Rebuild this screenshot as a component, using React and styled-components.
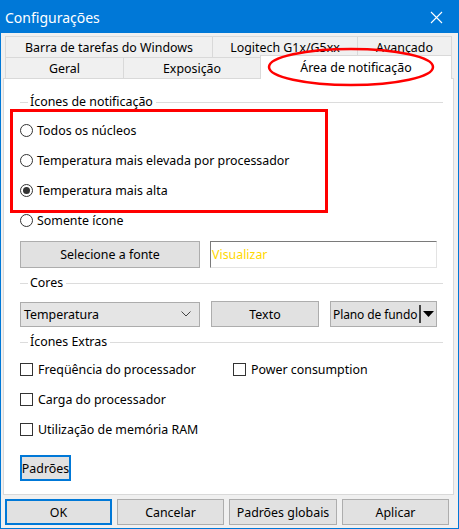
import React from "react";
import styled, { createGlobalStyle } from "styled-components";

const GlobalStyle = createGlobalStyle`
    html, body {
        margin: 0;
        padding: 0;
        background: #f0f0f0;
        overflow: hidden;
    }
    * { box-sizing: border-box; }
`;

const FONT = `"Noto Sans", "Open Sans", sans-serif`;

function App(){
    return(
        <Window>
            <GlobalStyle />
            <TitleBar>
                <span>Configurações</span>
                <CloseIcon width="13" height="13" viewBox="0 0 13 13">
                    <path d="M1 1 L12 12 M12 1 L1 12" stroke="#fff" strokeWidth="1.1" />
                </CloseIcon>
            </TitleBar>

            <Body>
                <TabRow>
                    <Tab width={207}>Barra de tarefas do Windows</Tab>
                    <Tab width={145}>Logitech G1x/G5xx</Tab>
                    <Tab width={95} last>Avançado</Tab>
                </TabRow>
                <TabRow>
                    <Tab width={118}>Geral</Tab>
                    <Tab width={137}>Exposição</Tab>
                    <Tab width={192} active last>Área de notificação</Tab>
                </TabRow>

                <Panel>
                    <GroupHeader><span>Ícones de notificação</span></GroupHeader>
                    <OptionList>
                        <Option><Radio /> Todos os núcleos</Option>
                        <Option><Radio /> Temperatura mais elevada por processador</Option>
                        <Option><Radio checked /> Temperatura mais alta</Option>
                        <Option><Radio /> Somente ícone</Option>
                    </OptionList>

                    <FontRow>
                        <Button width={180} height={27}>Selecione a fonte</Button>
                        <Preview>Visualizar</Preview>
                    </FontRow>

                    <GroupHeader gap={7}><span>Cores</span></GroupHeader>
                    <ColorRow>
                        <Select>
                            <span>Temperatura</span>
                            <svg width="10" height="6" viewBox="0 0 10 6">
                                <path d="M0.5 0.5 L5 5 L9.5 0.5" fill="none" stroke="#444" strokeWidth="1" />
                            </svg>
                        </Select>
                        <Button width={108} height={26}>Texto</Button>
                        <SplitButton>
                            <SplitLabel>Plano de fundo</SplitLabel>
                            <SplitDivider />
                            <ArrowIcon width="11" height="6" viewBox="0 0 11 6">
                                <path d="M0 0 L11 0 L5.5 6 Z" fill="#000" />
                            </ArrowIcon>
                        </SplitButton>
                    </ColorRow>

                    <GroupHeader gap={7}><span>Ícones Extras</span></GroupHeader>
                    <CheckGrid>
                        <Option><Check /> Freqüência do processador</Option>
                        <Option><Check /> Power consumption</Option>
                        <Option><Check /> Carga do processador</Option>
                        <span />
                        <Option><Check /> Utilização de memória RAM</Option>
                    </CheckGrid>

                    <Button width={51} height={26} focused gap={11}>Padrões</Button>
                </Panel>

                <Footer>
                    <Button width={107} height={26} focused>OK</Button>
                    <Button width={107} height={26}>Cancelar</Button>
                    <Button width={108} height={26}>Padrões globais</Button>
                    <Button width={107} height={26}>Aplicar</Button>
                </Footer>
            </Body>

            <MarkBox />
            <MarkEllipse width="170" height="42" viewBox="0 0 170 42">
                <ellipse cx="85" cy="21" rx="82" ry="18" fill="none" stroke="#ff0000" strokeWidth="2.5" />
            </MarkEllipse>
        </Window>
    )
}

const Window = styled.div`
    position: relative;
    width: 459px;
    height: 529px;
    border: 1px solid #0078d7;
    background: #f0f0f0;
    font-family: ${FONT};
    font-size: 12.4px;
    color: #000;
    display: flex;
    flex-direction: column;
`;

const TitleBar = styled.div`
    height: 32px;
    background: #0078d7;
    color: #fff;
    font-size: 14px;
    display: flex;
    align-items: center;
    justify-content: space-between;
    padding: 0 15px 0 4px;
`;

const CloseIcon = styled.svg`
    display: block;
`;

const Body = styled.div`
    flex: 1;
    display: flex;
    flex-direction: column;
    padding: 3px 4px 0 2px;
`;

const TabRow = styled.div`
    display: flex;
    margin: 0 0 0 2px;
    height: 21px;
`;

const Tab = styled.div`
    width: ${p => p.width}px;
    height: ${p => p.active ? 24 : 22}px;
    margin-top: ${p => p.active ? -2 : 0}px;
    background: ${p => p.active ? "#fff" : "#f0f0f0"};
    border: 1px solid #d9d9d9;
    border-right: ${p => p.last ? "1px solid #d9d9d9" : "none"};
    border-bottom: ${p => p.active ? "none" : "1px solid #d9d9d9"};
    display: flex;
    align-items: center;
    justify-content: center;
    padding-top: ${p => p.active ? 0 : 1}px;
    position: relative;
    z-index: ${p => p.active ? 2 : 0};
    white-space: nowrap;
`;

const Panel = styled.div`
    position: relative;
    z-index: 1;
    background: #fff;
    border: 1px solid #d9d9d9;
    height: 417px;
    padding: 15px 10px 0 16px;
    display: flex;
    flex-direction: column;
    align-items: flex-start;
`;

const GroupHeader = styled.div`
    align-self: stretch;
    display: flex;
    align-items: center;
    height: 16px;
    margin-top: ${p => p.gap || 0}px;
    &::before{
        content: "";
        width: 8px;
        border-top: 1px solid #dcdcdc;
    }
    &::after{
        content: "";
        flex: 1;
        border-top: 1px solid #dcdcdc;
    }
    span{
        padding: 0 3px 0 2px;
        line-height: 16px;
    }
`;

const OptionList = styled.div`
    display: flex;
    flex-direction: column;
    margin-top: 5px;
`;

const Option = styled.label`
    height: 30px;
    display: flex;
    align-items: center;
    gap: 4px;
    white-space: nowrap;
`;

const Radio = styled.span`
    width: 13px;
    height: 13px;
    border: 1px solid #333;
    border-radius: 50%;
    background: #fff;
    display: flex;
    align-items: center;
    justify-content: center;
    &::after{
        content: "";
        display: ${p => p.checked ? "block" : "none"};
        width: 7px;
        height: 7px;
        border-radius: 50%;
        background: #333;
    }
`;

const Check = styled.span`
    width: 13px;
    height: 13px;
    border: 1px solid #333;
    background: #fff;
    margin-right: 1px;
`;

const FontRow = styled.div`
    display: flex;
    gap: 10px;
    margin-top: 6px;
`;

const Button = styled.button`
    width: ${p => p.width}px;
    height: ${p => p.height}px;
    margin-top: ${p => p.gap || 0}px;
    background: #e1e1e1;
    border: ${p => p.focused ? "2px solid #0078d7" : "1px solid #adadad"};
    font-family: ${FONT};
    font-size: 12.4px;
    color: #000;
    padding: 0;
    display: flex;
    align-items: center;
    justify-content: center;
    white-space: nowrap;
`;

const Preview = styled.div`
    width: 227px;
    height: 27px;
    border: 1px solid #e3e3e3;
    border-top-color: #7a7a7a;
    border-left-color: #7a7a7a;
    color: #ffd800;
    display: flex;
    align-items: center;
    padding-left: 1px;
`;

const ColorRow = styled.div`
    display: flex;
    align-items: center;
    margin-top: 10px;
    gap: 11px;
`;

const Select = styled.div`
    width: 180px;
    height: 25px;
    background: #e5e5e5;
    border: 1px solid #acacac;
    display: flex;
    align-items: center;
    justify-content: space-between;
    padding: 0 8px 0 3px;
`;

const SplitButton = styled.div`
    width: 107px;
    height: 26px;
    background: #e1e1e1;
    border: 1px solid #adadad;
    display: flex;
    align-items: center;
    padding: 0 3px 0 2px;
    gap: 2px;
    white-space: nowrap;
    overflow: hidden;
`;

const SplitLabel = styled.span`
    flex: 1;
    font-size: 12px;
    letter-spacing: -0.1px;
`;

const SplitDivider = styled.span`
    flex-shrink: 0;
    width: 2px;
    height: 18px;
    background: #444;
`;

const ArrowIcon = styled.svg`
    flex-shrink: 0;
    display: block;
`;

const CheckGrid = styled.div`
    display: grid;
    grid-template-columns: 213px auto;
    margin-top: 4px;
`;

const Footer = styled.div`
    display: flex;
    gap: 5px;
    margin: 4px 0 0 2px;
`;

const MarkBox = styled.div`
    position: absolute;
    left: 9px;
    top: 108px;
    width: 318px;
    height: 104px;
    border: 3px solid #ff0000;
    z-index: 5;
    pointer-events: none;
`;

const MarkEllipse = styled.svg`
    position: absolute;
    left: 265px;
    top: 45px;
    z-index: 5;
    pointer-events: none;
`;

export default App
